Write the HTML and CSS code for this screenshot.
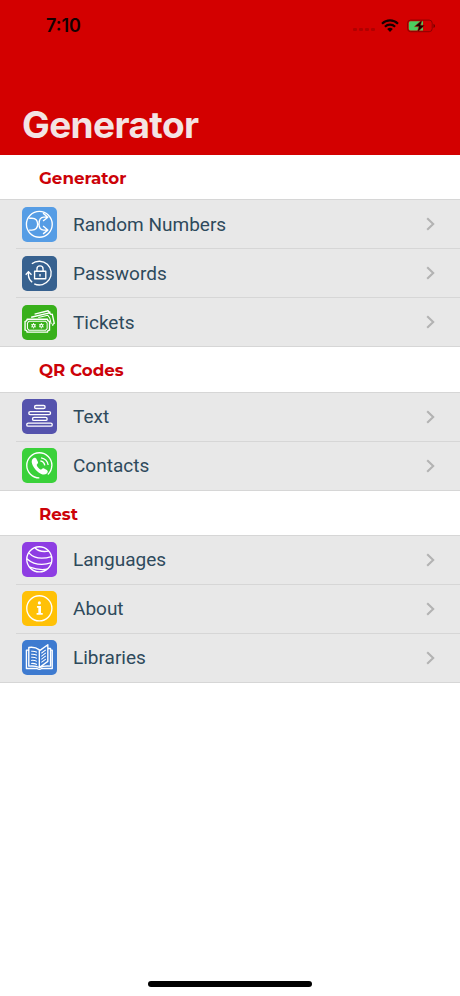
FILE: index.html
```html
<!DOCTYPE html>
<html lang="en">
<head>
    <meta charset="UTF-8">
    <meta name="viewport" content="width=device-width, initial-scale=1.0">
    <title>Generator</title>
    <link rel="stylesheet" href="styles.css">
</head>
<body>
    <!-- Header -->
    <header class="header">
        <div class="status-bar">
            <span class="time">7:10</span>
            <div class="status-icons">
                <div class="signal"><i></i><i></i><i></i><i></i></div>
                <svg class="wifi" viewBox="0 0 18 13">
                    <path d="M1 4.7a11.5 11.5 0 0 1 16 0M3.9 7.8a7.3 7.3 0 0 1 10.2 0" fill="none" stroke="#160000" stroke-width="2.2"/>
                    <path d="M9 13 6.2 10.1a4 4 0 0 1 5.6 0z" fill="#160000"/>
                </svg>
                <svg class="battery" viewBox="0 0 29 14">
                    <rect x=".6" y="1.1" width="24.6" height="11.6" rx="3" fill="none" stroke="#8c0000" stroke-width="1"/>
                    <path d="M3.5 2.3H16v9.2H3.5a1.7 1.7 0 0 1-1.7-1.7V4a1.7 1.7 0 0 1 1.7-1.7z" fill="#4ccb5f"/>
                    <path d="M26.5 4.7c2 .8 2 3.6 0 4.4z" fill="#6a0000"/>
                    <path d="M15.2.8 7.6 7.6h4.3l-1.6 5.6 7.4-7h-4.2z" fill="#160000" stroke="#d30000" stroke-width=".5"/>
                </svg>
            </div>
        </div>
        <h1>Generator</h1>
    </header>

    <main>
        <h2>Generator</h2>
        <ul class="list">
            <li>
                <svg class="icon random" viewBox="0 0 103 103">
                    <circle cx="51" cy="51" r="38"/>
                    <path d="M21 33h8c12 0 17 8 17 18s-5 17-17 17h-8M76 30H64c-10 0-14 10-14 21s4 17 14 17h12M62 18l14 12-14 11M62 56l14 12-14 11"/>
                </svg>
                <span>Random Numbers</span>
                <svg class="chevron" viewBox="0 0 9 14"><path d="M1.2 1.2 7.2 7l-6 5.8"/></svg>
            </li>
            <li>
                <svg class="icon passwords" viewBox="0 0 103 103">
                    <path d="M29 23A35 35 0 1 1 36 82M30 77Q20 69 19 58V47M11 55l8-9 9 9"/>
                    <rect x="37" y="45" width="33" height="22"/>
                    <path d="M44 44v-6a9 9 0 0 1 18 0v6M53 53v7"/>
                </svg>
                <span>Passwords</span>
                <svg class="chevron" viewBox="0 0 9 14"><path d="M1.2 1.2 7.2 7l-6 5.8"/></svg>
            </li>
            <li>
                <svg class="icon tickets" viewBox="0 0 103 103">
                    <path d="M15 42h60q0 6 6 6v26q-6 0-6 6H15q0-6-6-6V48q6 0 6-6z"/>
                    <path class="thin" d="M20 48h50l4 5v16l-4 5H20l-4-5V53z"/>
                    <path d="M27 36l54-13q2 6 8 4l6 27q-5 1-5 7M37 27l40-10q2 5 7 4"/>
                    <path class="thin" d="M48 37l28-7 6 9 4 17"/>
                    <circle class="thin" cx="34" cy="61" r="4"/><circle class="thin" cx="57" cy="61" r="4"/>
                    <path class="ticks" d="M34 53v4M34 65v4M27 57l3 2M38 63l3 2M41 57l-3 2M30 63l-3 2M57 53v4M57 65v4M50 57l3 2M61 63l3 2M64 57l-3 2M53 63l-3 2"/>
                </svg>
                <span>Tickets</span>
                <svg class="chevron" viewBox="0 0 9 14"><path d="M1.2 1.2 7.2 7l-6 5.8"/></svg>
            </li>
        </ul>

        <h2>QR Codes</h2>
        <ul class="list">
            <li>
                <svg class="icon text" viewBox="0 0 103 103">
                    <rect x="37" y="19" width="31" height="9" rx="4.5"/>
                    <rect x="20" y="37" width="64" height="9" rx="4.5"/>
                    <rect x="31" y="54" width="43" height="9" rx="4.5"/>
                    <rect x="14" y="71" width="75" height="9" rx="4.5"/>
                </svg>
                <span>Text</span>
                <svg class="chevron" viewBox="0 0 9 14"><path d="M1.2 1.2 7.2 7l-6 5.8"/></svg>
            </li>
            <li>
                <svg class="icon contacts" viewBox="0 0 103 103">
                    <path d="M51 88A37 37 0 1 1 88 51q-1 18-12 27"/>
                    <path class="solid" d="M32 32c4-5 9-3 11 1l4 8c1 4-2 6-4 8 2 7 7 12 13 15 3-3 5-6 9-4l8 5c4 3 4 7 0 10-6 5-15 4-25-4C37 62 31 53 29 44c-1-5 0-9 3-12z"/>
                    <path d="M54 38q11 2 13 13M56 29q18 3 21 21"/>
                </svg>
                <span>Contacts</span>
                <svg class="chevron" viewBox="0 0 9 14"><path d="M1.2 1.2 7.2 7l-6 5.8"/></svg>
            </li>
        </ul>

        <h2>Rest</h2>
        <ul class="list">
            <li>
                <svg class="icon languages" viewBox="0 0 103 103">
                    <circle cx="51" cy="51" r="37"/>
                    <path d="M38 17q12 14 40 10M20 32q22 24 67 11M14 49q30 26 73 12M23 74q26 10 51 6"/>
                </svg>
                <span>Languages</span>
                <svg class="chevron" viewBox="0 0 9 14"><path d="M1.2 1.2 7.2 7l-6 5.8"/></svg>
            </li>
            <li>
                <svg class="icon about" viewBox="0 0 103 103">
                    <circle cx="51" cy="51" r="37"/>
                    <circle class="solid" cx="51" cy="35" r="4.5"/>
                    <path class="solid" d="M44 44h12v21h5v5H43v-5h5V49h-4z"/>
                </svg>
                <span>About</span>
                <svg class="chevron" viewBox="0 0 9 14"><path d="M1.2 1.2 7.2 7l-6 5.8"/></svg>
            </li>
            <li>
                <svg class="icon libraries" viewBox="0 0 103 103">
                    <path d="M51 81V29Q38 19 20 22v55q20-2 31 4zM51 81V32L76 14v49zM76 25h8v52q-20-2-33 4M20 30h-7v54h31q7 5 14 0h31V30h-5"/>
                    <path class="thin" d="M27 33q9-1 17 3M27 42q9-1 17 3M27 51q9-1 17 3M27 60q9-1 17 3M27 69q9-1 17 3M57 39l13-10M57 48l13-10M57 57l13-10M57 66l13-10"/>
                </svg>
                <span>Libraries</span>
                <svg class="chevron" viewBox="0 0 9 14"><path d="M1.2 1.2 7.2 7l-6 5.8"/></svg>
            </li>
        </ul>
    </main>

    <div class="home-indicator"></div>
</body>
</html>
```
FILE: styles.css
```css
* {
    box-sizing: border-box;
}

body {
    margin: 0;
    height: 996px;
    display: flex;
    flex-direction: column;
    background: #fff;
    font-family: Roboto, sans-serif;
    overflow: hidden;
}

/* Header */
.header {
    height: 155px;
    flex: none;
    background: #d30000;
    display: flex;
    flex-direction: column;
    justify-content: space-between;
    padding: 14px 24px 7px 22px;
}

.status-bar {
    display: flex;
    justify-content: space-between;
    align-items: center;
    height: 23px;
    padding-left: 24px;
}

.time {
    font: 600 18px Inter, sans-serif;
    color: #160000;
}

.status-icons {
    display: flex;
    align-items: center;
}

.signal {
    display: flex;
    gap: 2px;
    margin: 8px 6px 0 0;
}

.signal i {
    width: 4px;
    height: 3px;
    border-radius: 1px;
    background: #b00000;
}

.wifi {
    width: 18px;
    height: 13px;
    margin-right: 8px;
}

.battery {
    width: 29px;
    height: 14px;
}

h1 {
    margin: 0;
    font: 700 37px/46px Inter, sans-serif;
    letter-spacing: -0.6px;
    color: #f3e4e4;
}

/* Sections */
h2 {
    margin: 0;
    height: 44.3px;
    padding-left: 39px;
    font: 700 16.7px/46px Montserrat, Inter, sans-serif;
    color: #cc0208;
}

.list {
    list-style: none;
    margin: 0;
    padding: 0;
    background: #e8e8e8;
    border-top: 1px solid #d6d6d6;
    border-bottom: 1px solid #d6d6d6;
}

.list li {
    display: flex;
    align-items: center;
    height: 48px;
    margin-left: 16px;
    padding: 0 25px 0 6px;
    font-size: 19px;
    color: #2e4a5c;
}

.list li + li {
    height: 49px;
    border-top: 1px solid #d6d6d6;
}

.list span {
    flex: 1;
    margin-left: 16px;
}

.chevron {
    width: 9px;
    height: 14px;
    fill: none;
    stroke: #b3b3b3;
    stroke-width: 2.1;
}

/* Icons */
.icon {
    width: 35px;
    height: 35px;
    border-radius: 5px;
    fill: none;
    stroke: #fff;
    stroke-width: 4;
    stroke-linejoin: round;
}

.icon .solid {
    fill: #fff;
    stroke: none;
}

.icon .thin {
    stroke-width: 3;
}

.icon .ticks {
    stroke-width: 2.5;
}

.random {
    background: #569de5;
}

.passwords {
    background: #37618f;
}

.tickets {
    background: #38b01b;
}

.text {
    background: #5553ad;
}

.contacts {
    background: #3ad13a;
}

.languages {
    background: #8e3de3;
}

.about {
    background: #ffc107;
}

.libraries {
    background: #3e7bd0;
}

/* Home indicator */
.home-indicator {
    width: 164px;
    height: 6px;
    flex: none;
    margin: auto auto 9px;
    border-radius: 3px;
    background: #000;
}
```
